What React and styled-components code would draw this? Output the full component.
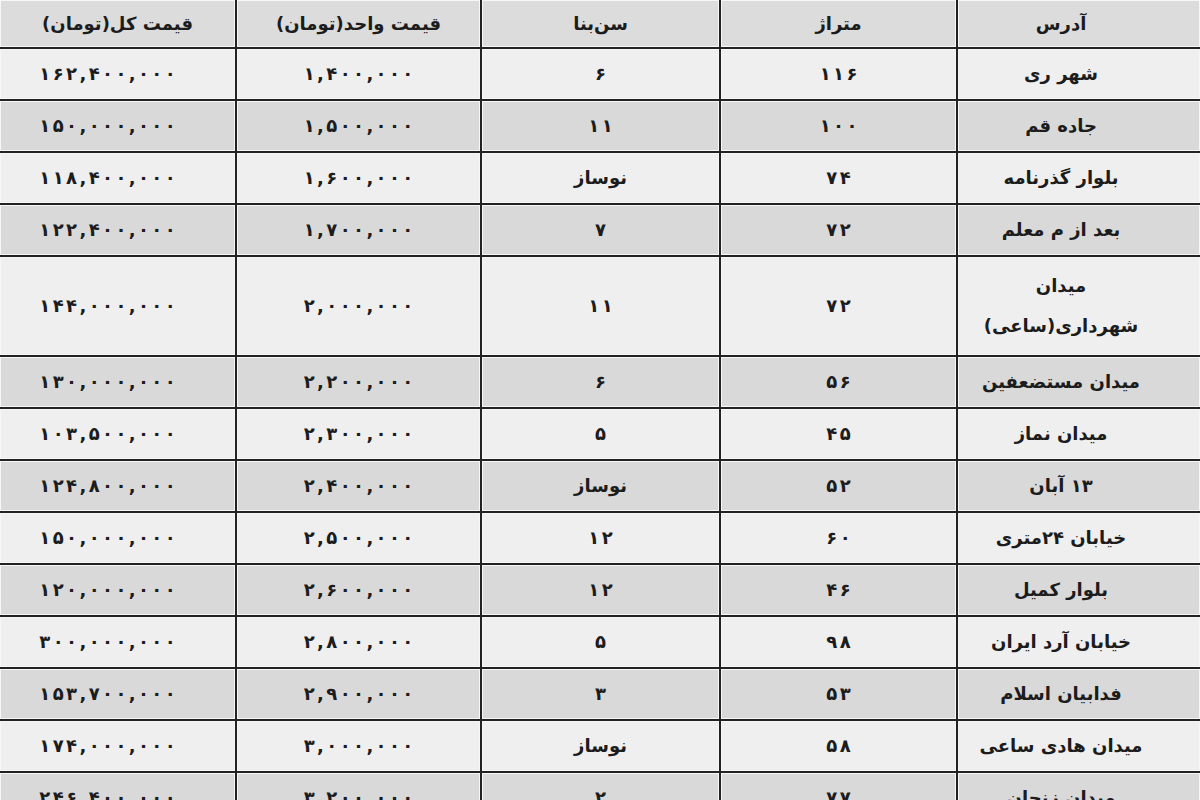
import React from "react";
import styled, { createGlobalStyle } from "styled-components";

const GlobalStyle = createGlobalStyle`
  html, body {
    margin: 0;
    padding: 0;
    background: #ffffff;
    overflow: hidden;
  }
`;

const Page = styled.div`
  width: 1200px;
  height: 800px;
  overflow: hidden;
  font-family: "DejaVu Sans", "Noto Sans", sans-serif;
`;

const Table = styled.div`
  display: grid;
  direction: rtl;
  grid-template-columns: 242px 235px 237px 243px 235px;
  gap: 2px;
  background: #222222;
  padding-bottom: 2px;
`;

const Cell = styled.div`
  box-sizing: border-box;
  display: flex;
  align-items: center;
  justify-content: center;
  text-align: center;
  border: 1px solid #f7f7f7;
  background: ${(props) => (props.$dark ? "#d9d9d9" : "#efefef")};
  color: #1c1c1c;
  font-size: 18px;
  font-weight: bold;
  line-height: 40px;
  min-height: 50px;
  padding: ${(props) => (props.$tall ? "8px" : "0")} 8px;
  padding-right: ${(props) => (props.$address ? "44px" : props.$total ? "20px" : "8px")};
  padding-left: ${(props) => (props.$total ? "0" : "8px")};
  white-space: nowrap;
`;

const HeadCell = styled(Cell)`
  background: #dcdcdc;
  min-height: 47px;
`;

const Line = styled.span`
  display: block;
`;

const Digit = styled.span`
  display: inline-block;
  padding: 0 1.2px;
`;

const headers = ["آدرس", "متراژ", "سن‌بنا", "قیمت واحد(تومان)", "قیمت کل(تومان)"];

const rows = [
  ["شهر ری", "۱۱۶", "۶", "۱,۴۰۰,۰۰۰", "۱۶۲,۴۰۰,۰۰۰"],
  ["جاده قم", "۱۰۰", "۱۱", "۱,۵۰۰,۰۰۰", "۱۵۰,۰۰۰,۰۰۰"],
  ["بلوار گذرنامه", "۷۴", "نوساز", "۱,۶۰۰,۰۰۰", "۱۱۸,۴۰۰,۰۰۰"],
  ["بعد از م معلم", "۷۲", "۷", "۱,۷۰۰,۰۰۰", "۱۲۲,۴۰۰,۰۰۰"],
  [["میدان", "شهرداری(ساعی)"], "۷۲", "۱۱", "۲,۰۰۰,۰۰۰", "۱۴۴,۰۰۰,۰۰۰"],
  ["میدان مستضعفین", "۵۶", "۶", "۲,۲۰۰,۰۰۰", "۱۳۰,۰۰۰,۰۰۰"],
  ["میدان نماز", "۴۵", "۵", "۲,۳۰۰,۰۰۰", "۱۰۳,۵۰۰,۰۰۰"],
  ["۱۳ آبان", "۵۲", "نوساز", "۲,۴۰۰,۰۰۰", "۱۲۴,۸۰۰,۰۰۰"],
  ["خیابان ۲۴متری", "۶۰", "۱۲", "۲,۵۰۰,۰۰۰", "۱۵۰,۰۰۰,۰۰۰"],
  ["بلوار کمیل", "۴۶", "۱۲", "۲,۶۰۰,۰۰۰", "۱۲۰,۰۰۰,۰۰۰"],
  ["خیابان آرد ایران", "۹۸", "۵", "۲,۸۰۰,۰۰۰", "۳۰۰,۰۰۰,۰۰۰"],
  ["فدابیان اسلام", "۵۳", "۳", "۲,۹۰۰,۰۰۰", "۱۵۳,۷۰۰,۰۰۰"],
  ["میدان هادی ساعی", "۵۸", "نوساز", "۳,۰۰۰,۰۰۰", "۱۷۴,۰۰۰,۰۰۰"],
  ["میدان زنجان", "۷۷", "۲", "۳,۲۰۰,۰۰۰", "۲۴۶,۴۰۰,۰۰۰"],
];

const isNumber = (value) => typeof value === "string" && /^[۰-۹,]+$/.test(value);

const Number = ({ value }) => (
  <span dir="ltr">
    {value.split("").map((ch, k) => (
      <Digit key={k}>{ch}</Digit>
    ))}
  </span>
);

const renderValue = (value) => {
  if (Array.isArray(value)) {
    return (
      <div>
        {value.map((line) => (
          <Line key={line}>{line}</Line>
        ))}
      </div>
    );
  }
  if (isNumber(value)) return <Number value={value} />;
  return value;
};

const App = () => {
  return (
    <Page>
      <GlobalStyle />
      <Table>
        {headers.map((h, j) => (
          <HeadCell key={h} $address={j === 0}>
            {h}
          </HeadCell>
        ))}
        {rows.map((row, i) =>
          row.map((value, j) => (
            <Cell
              key={`${i}-${j}`}
              $dark={i % 2 === 1}
              $address={j === 0}
              $total={j === 4}
              $tall={Array.isArray(value)}
            >
              {renderValue(value)}
            </Cell>
          ))
        )}
      </Table>
    </Page>
  );
};

export default App;
